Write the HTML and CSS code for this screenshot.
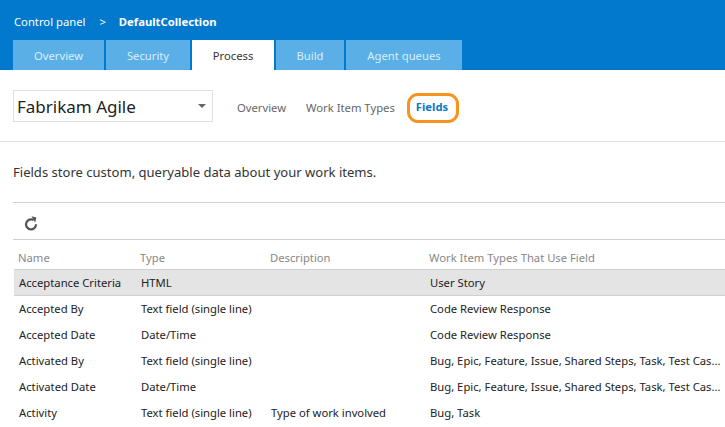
FILE: index.html
```html
<!DOCTYPE html>
<html>
<head>
    <title>Fields - Control panel</title>
    <meta charset="utf-8">
    <link rel="stylesheet" href="styles.css">
</head>
<body>
    <header class="top">
        <div class="crumbs">
            <span>Control panel</span>
            <span class="crumb-sep">&gt;</span>
            <b>DefaultCollection</b>
        </div>
        <nav class="tabs">
            <a class="tab tab-overview">Overview</a>
            <a class="tab tab-security">Security</a>
            <a class="tab tab-process active">Process</a>
            <a class="tab tab-build">Build</a>
            <a class="tab tab-queues">Agent queues</a>
        </nav>
    </header>

    <section class="process-bar">
        <div class="picker">
            <span>Fabrikam Agile</span>
            <i class="caret"></i>
        </div>
        <nav class="subnav">
            <a>Overview</a>
            <a>Work Item Types</a>
            <a class="current">Fields</a>
        </nav>
    </section>

    <p class="intro">Fields store custom, queryable data about your work items.</p>

    <div class="toolbar">
        <svg width="14" height="15" viewBox="0 0 14 15" fill="none">
            <path d="M9.6 4.1 A5 5 0 1 0 12 8.2" stroke="#555" stroke-width="2.2"/>
            <path d="M7.4 0.2 L12.4 1.4 L11.2 6.6 Z" fill="#555"/>
        </svg>
    </div>

    <table class="grid">
        <thead>
            <tr>
                <th class="col-name">Name</th>
                <th class="col-type">Type</th>
                <th class="col-desc">Description</th>
                <th>Work Item Types That Use Field</th>
            </tr>
        </thead>
        <tbody>
            <tr class="selected">
                <td>Acceptance Criteria</td>
                <td>HTML</td>
                <td></td>
                <td>User Story</td>
            </tr>
            <tr>
                <td>Accepted By</td>
                <td>Text field (single line)</td>
                <td></td>
                <td>Code Review Response</td>
            </tr>
            <tr>
                <td>Accepted Date</td>
                <td>Date/Time</td>
                <td></td>
                <td>Code Review Response</td>
            </tr>
            <tr>
                <td>Activated By</td>
                <td>Text field (single line)</td>
                <td></td>
                <td>Bug, Epic, Feature, Issue, Shared Steps, Task, Test Cas...</td>
            </tr>
            <tr>
                <td>Activated Date</td>
                <td>Date/Time</td>
                <td></td>
                <td>Bug, Epic, Feature, Issue, Shared Steps, Task, Test Cas...</td>
            </tr>
            <tr>
                <td>Activity</td>
                <td>Text field (single line)</td>
                <td>Type of work involved</td>
                <td>Bug, Task</td>
            </tr>
        </tbody>
    </table>
</body>
</html>
```

FILE: styles.css
```css
:root {
    --blue: #0279cd;
    --tab-blue: #5aafe6;
    --line: #d0d0d0;
}

html, body {
    margin: 0;
    padding: 0;
    overflow: hidden;
    background: #fff;
    color: #222;
    font-family: "Noto Sans", "Open Sans", sans-serif;
    font-size: 11.25px;
}

.top {
    height: 70px;
    background: var(--blue);
    display: flex;
    flex-direction: column;
    justify-content: space-between;
    padding-left: 13px;
    box-sizing: border-box;
}

.crumbs {
    padding: 14px 0 0 1px;
    color: #fff;
    line-height: 16px;
    display: flex;
}

.crumb-sep {
    margin: 0 13px 0 14px;
}

.tabs {
    display: flex;
    height: 30px;
    gap: 2px;
}

.tab {
    background: var(--tab-blue);
    color: #d9eefb;
    line-height: 31px;
    text-align: center;
}

.tab-overview { width: 91px; }
.tab-security { width: 84px; }
.tab-process { width: 82px; }
.tab-build { width: 68px; }
.tab-queues { width: 116px; }

.tab.active {
    background: #fff;
    color: #333;
}

.process-bar {
    display: flex;
    align-items: flex-start;
    height: 32px;
    padding: 20px 0 19px 13px;
    border-bottom: 1px solid #e2e2e2;
}

.picker {
    width: 200px;
    height: 32px;
    box-sizing: border-box;
    border: 1px solid #e0e0e0;
    padding: 0 6px 0 3px;
    display: flex;
    align-items: center;
    justify-content: space-between;
    font-size: 17px;
    color: #222;
}

.caret {
    width: 0;
    height: 0;
    border-left: 4px solid transparent;
    border-right: 4px solid transparent;
    border-top: 4px solid #666;
}

.subnav {
    display: flex;
    align-items: center;
    height: 30px;
    margin: 2px 0 0 24px;
    color: #666;
}

.subnav a {
    margin-right: 20px;
}

.subnav .current {
    margin: 2px 0 0 -8px;
    padding: 0 8px 0 6px;
    height: 24px;
    line-height: 21px;
    border: 3px solid #f7931e;
    border-radius: 11px;
    color: #0a78c8;
    font-weight: 700;
}

.intro {
    margin: 21px 0 21px 13px;
    font-size: 13.05px;
    line-height: 18px;
    color: #333;
}

.toolbar {
    margin-left: 13px;
    height: 36px;
    border-top: 1px solid var(--line);
    border-bottom: 1px solid var(--line);
    display: flex;
    align-items: center;
    padding-left: 11px;
}

.toolbar svg {
    margin-top: 5px;
}

.grid {
    margin-left: 14px;
    width: 711px;
    table-layout: fixed;
    border-collapse: collapse;
}

.grid th {
    height: 29px;
    padding: 7px 0 0 4px;
    box-sizing: border-box;
    text-align: left;
    font-weight: 400;
    color: #888;
}

.grid td {
    height: 26px;
    padding: 0 0 0 5px;
    box-sizing: border-box;
    white-space: nowrap;
}

.col-name { width: 122px; }
.col-type { width: 130px; }
.col-desc { width: 159px; }

.grid .selected td {
    background: #e4e4e4;
    border-top: 1px solid var(--line);
    border-bottom: 1px solid var(--line);
}
```
